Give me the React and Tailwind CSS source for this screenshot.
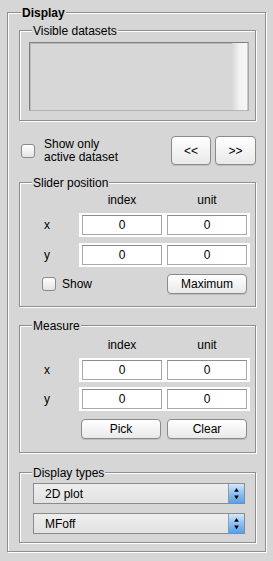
import React from "react";

function Group({ title, bold, titleLeft = "left-[12px]", className = "", children }) {
  return (
    <div
      className={`relative border border-[#8e8e8e] shadow-[inset_1px_1px_0_#ffffff,1px_1px_0_#ffffff] ${className}`}
    >
      <span
        className={`absolute top-[-7px] ${titleLeft} bg-[#d6d6d6] px-[1px] text-[12px] leading-[14px] text-black whitespace-nowrap ${
          bold ? "font-bold" : ""
        }`}
      >
        {title}
      </span>
      {children}
    </div>
  );
}

function Checkbox() {
  return (
    <div className="w-[14px] h-[14px] rounded-[3px] border border-[#8a8a8a] bg-gradient-to-b from-[#ffffff] to-[#e4e4e4] shrink-0" />
  );
}

function Button({ children, className = "" }) {
  return (
    <div
      className={`flex items-center justify-center rounded-[4px] border border-[#8a8a8a] bg-gradient-to-b from-[#ffffff] to-[#e9e9e9] text-[12px] leading-[14px] text-black shadow-[0_1px_0_#bdbdbd] ${className}`}
    >
      {children}
    </div>
  );
}

function Field({ value }) {
  return (
    <div className="w-[80px] h-[20px] bg-white border border-[#a8a8a8] border-t-[#8c8c8c] flex items-center justify-center text-[12px] leading-[14px] text-black">
      {value}
    </div>
  );
}

function FieldRow({ label, className = "" }) {
  return (
    <div className={`flex items-center h-[24px] ${className}`}>
      <div className="w-[59px] pl-[24px] text-[12px] leading-[14px] text-black">{label}</div>
      <div className="w-[171px] h-[24px] bg-white flex items-center gap-[5px] px-[3px]">
        <Field value="0" />
        <Field value="0" />
      </div>
    </div>
  );
}

function Header() {
  return (
    <div className="flex h-[14px] pl-[62px] text-[12px] leading-[14px] text-black">
      <span className="w-[80px] text-center">index</span>
      <span className="w-[80px] ml-[5px] text-center">unit</span>
    </div>
  );
}

function Select({ label, className = "" }) {
  return (
    <div
      className={`w-[212px] h-[21px] border border-[#8b8b8b] bg-gradient-to-b from-[#eeeeee] to-[#e2e2e2] flex items-center ${className}`}
    >
      <span className="flex-1 pl-[11px] text-[12px] leading-[14px] text-black">{label}</span>
      <div className="w-[16px] h-full border-l border-[#8b9bb0] bg-gradient-to-b from-[#d2e8fd] via-[#8cc0f3] to-[#5a9ee9] flex items-center justify-center">
        <svg width="16" height="19" viewBox="0 0 16 19">
          <polygon points="5.5,7.5 10.5,7.5 8,3.5" fill="#000" />
          <polygon points="5.5,11.5 10.5,11.5 8,15.5" fill="#000" />
        </svg>
      </div>
    </div>
  );
}

export default function App() {
  return (
    <div className="w-[273px] h-[561px] bg-[#d6d6d6] pt-[12px] pl-[7px] font-['Liberation_Sans',Arial,sans-serif] overflow-hidden">
      <Group
        bold
        title="Display"
        titleLeft="left-[13px]"
        className="w-[259px] h-[540px] pl-[11px] pr-[9px] pt-[17px] flex flex-col"
      >
        <Group title="Visible datasets" className="h-[91px] pt-[11px] shrink-0">
          <div className="ml-[9px] w-[220px] h-[69px] border border-[#7f7f7f] border-r-[#a9a9a9] border-b-[#b5b5b5] shadow-[inset_1px_1px_0_#b9b9b9] bg-[#d7d7d7] flex justify-end">
            <div className="w-[16px] h-full bg-gradient-to-r from-[#d8d8d8] via-[#f2f2f2] to-[#f7f7f7] border-r border-[#c8c8c8]" />
          </div>
        </Group>

        <div className="mt-[15px] h-[29px] flex items-center justify-between shrink-0">
          <div className="flex items-center ml-[2px]">
            <Checkbox />
            <div className="ml-[9px] text-[12px] leading-[13px] text-black">
              <div>Show only</div>
              <div>active dataset</div>
            </div>
          </div>
          <div className="flex gap-[4px]">
            <Button className="w-[40px] h-[29px]">&lt;&lt;</Button>
            <Button className="w-[41px] h-[29px]">&gt;&gt;</Button>
          </div>
        </div>

        <Group title="Slider position" className="mt-[17px] h-[125px] pt-[10px] shrink-0">
          <Header />
          <FieldRow label="x" className="mt-[6px]" />
          <FieldRow label="y" className="mt-[6px]" />
          <div className="mt-[7px] flex items-center h-[20px]">
            <div className="w-[147px] pl-[22px] flex items-center">
              <Checkbox />
              <span className="ml-[6px] text-[12px] leading-[14px] text-black">Show</span>
            </div>
            <Button className="w-[80px] h-[20px]">Maximum</Button>
          </div>
        </Group>

        <Group title="Measure" className="mt-[18px] h-[128px] pt-[12px] shrink-0">
          <Header />
          <FieldRow label="x" className="mt-[6px]" />
          <FieldRow label="y" className="mt-[5px]" />
          <div className="mt-[8px] ml-[61px] flex gap-[6px]">
            <Button className="w-[80px] h-[20px]">Pick</Button>
            <Button className="w-[80px] h-[20px]">Clear</Button>
          </div>
        </Group>

        <Group title="Display types" className="mt-[19px] h-[71px] pt-[10px] pl-[13px] shrink-0">
          <Select label="2D plot" />
          <Select label="MFoff" className="mt-[9px]" />
        </Group>
      </Group>
    </div>
  );
}
